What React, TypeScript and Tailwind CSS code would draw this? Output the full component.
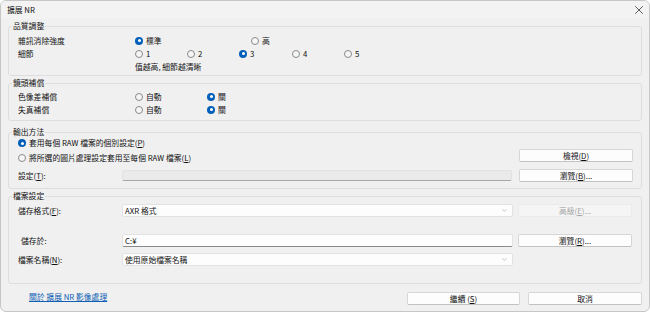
import { X, ChevronDown } from 'lucide-react'
import clsx from 'clsx'

function Radio({ checked, label, className }: { checked?: boolean; label: React.ReactNode; className?: string }) {
  return (
    <span className={clsx('flex items-center gap-[3px] shrink-0', className)}>
      {checked ? (
        <span className="w-[8px] h-[8px] rounded-full bg-[#005fb8] flex items-center justify-center shrink-0">
          <span className="w-[3px] h-[3px] rounded-full bg-white" />
        </span>
      ) : (
        <span className="w-[8px] h-[8px] rounded-full border border-[#8a8a8a] bg-[#f6f6f6] shrink-0" />
      )}
      <span>{label}</span>
    </span>
  )
}

function Button({ children, className, disabled }: { children: React.ReactNode; className?: string; disabled?: boolean }) {
  return (
    <div
      className={clsx(
        'h-[13px] rounded-[2px] border flex items-center justify-center shrink-0',
        disabled
          ? 'bg-[#f5f5f5] border-[#ebebeb] text-[#a3a3a3]'
          : 'bg-[#fdfdfd] border-[#d6d6d6] border-b-[#c2c2c2]',
        className
      )}
    >
      {children}
    </div>
  )
}

function Select({ value }: { value: string }) {
  return (
    <div className="w-[391px] h-[13px] rounded-[2px] border border-[#e2e2e2] bg-[#fdfdfd] flex items-center justify-between pl-[2px] pr-[4px] shrink-0">
      <span>{value}</span>
      <ChevronDown className="w-[7px] h-[7px] text-[#777]" strokeWidth={1.5} />
    </div>
  )
}

export default function App() {
  return (
    <div className="w-[650px] h-[312px] flex flex-col overflow-hidden rounded-[6px] border border-[#c6c6c6] bg-[#f0f0f0] text-[7.8px] leading-[10px] text-[#111] font-['Noto_Sans_CJK_TC','Noto_Sans',sans-serif]">
      {/* Title bar */}
      <div className="h-[18px] shrink-0 flex items-center justify-between pl-[6px] pr-[3px] bg-[#f3f3f3]">
        <span>擴展 NR</span>
        <X className="w-[14px] h-[14px] text-[#2b2b2b]" strokeWidth={1.3} />
      </div>

      <div className="flex flex-col px-[7px]">
        {/* 品質調整 */}
        <fieldset className="mt-[2px] border border-[#dddddd] rounded-[3px] pl-[9px] pr-[9px] pt-[3px] pb-[2px]">
          <legend className="ml-[-6px] px-[1px]">品質調整</legend>
          <div className="flex h-[13px] items-center">
            <span className="w-[117px] shrink-0">雜訊消除強度</span>
            <Radio checked label="標準" className="w-[116px]" />
            <Radio label="高" />
          </div>
          <div className="flex h-[13px] items-center">
            <span className="w-[117px] shrink-0">細節</span>
            <Radio label="1" className="w-[52px]" />
            <Radio label="2" className="w-[52px]" />
            <Radio checked label="3" className="w-[53px]" />
            <Radio label="4" className="w-[52px]" />
            <Radio label="5" />
          </div>
          <div className="flex h-[13px] items-center pl-[117px]">值越高, 細節越清晰</div>
        </fieldset>

        {/* 鏡頭補償 */}
        <fieldset className="mt-[2px] border border-[#dddddd] rounded-[3px] pl-[9px] pr-[9px] pt-[2px] pb-[4px]">
          <legend className="ml-[-6px] px-[1px]">鏡頭補償</legend>
          <div className="flex h-[13px] items-center">
            <span className="w-[117px] shrink-0">色像差補償</span>
            <Radio label="自動" className="w-[72px]" />
            <Radio checked label="關" />
          </div>
          <div className="flex h-[13px] items-center">
            <span className="w-[117px] shrink-0">失真補償</span>
            <Radio label="自動" className="w-[72px]" />
            <Radio checked label="關" />
          </div>
        </fieldset>

        {/* 輸出方法 */}
        <fieldset className="mt-[6px] border border-[#dddddd] rounded-[3px] pl-[9px] pr-[8px] pb-[6px]">
          <legend className="ml-[-6px] px-[1px]">輸出方法</legend>
          <div className="flex h-[12px] items-center">
            <Radio checked label={<>套用每個 RAW 檔案的個別設定(<u>P</u>)</>} />
          </div>
          <div className="flex h-[14px] items-start">
            <Radio label={<>將所選的圖片處理設定套用至每個 RAW 檔案(<u>L</u>)</>} className="mt-[4px]" />
            <Button className="ml-auto w-[114px]">
              檢視(<u>D</u>)
            </Button>
          </div>
          <div className="mt-[6px] flex h-[13px] items-center">
            <span className="w-[104px] shrink-0">
              設定(<u>T</u>):
            </span>
            <div className="w-[390px] h-[11px] rounded-[2px] bg-[#eaeaea] border border-[#e2e2e2] border-b-[#a6a6a6] shrink-0" />
            <Button className="ml-auto w-[114px]">
              瀏覽(<u>B</u>)...
            </Button>
          </div>
        </fieldset>

        {/* 檔案設定 */}
        <fieldset className="mt-[2px] border border-[#dddddd] rounded-[3px] pl-[9px] pr-[9px] pt-[3px] pb-[17px]">
          <legend className="ml-[-6px] px-[1px]">檔案設定</legend>
          <div className="flex h-[13px] items-center">
            <span className="w-[104px] shrink-0">
              儲存格式(<u>F</u>):
            </span>
            <Select value="AXR 格式" />
            <Button disabled className="ml-auto w-[114px] h-[12px]">
              高級(<u>E</u>)...
            </Button>
          </div>
          <div className="mt-[17px] flex h-[13px] items-center">
            <span className="w-[104px] shrink-0 pl-[3px]">儲存於:</span>
            <div className="w-[391px] h-[13px] rounded-[2px] bg-[#fdfdfd] border border-[#e3e3e3] border-b-[#8a8a8a] flex items-center pl-[2px] shrink-0">
              C:¥
            </div>
            <Button className="ml-auto w-[114px]">
              瀏覽(<u>R</u>)...
            </Button>
          </div>
          <div className="mt-[6px] flex h-[13px] items-center">
            <span className="w-[104px] shrink-0">
              檔案名稱(<u>N</u>):
            </span>
            <Select value="使用原始檔案名稱" />
          </div>
        </fieldset>

        {/* Footer */}
        <div className="mt-[8px] flex items-start">
          <span className="ml-[21px] text-[#0f5fb5] underline">關於 擴展 NR 影像處理</span>
          <Button className="ml-auto w-[113px] border-[#3f86d2] border-b-[#3f86d2]">
            繼續 (<u>S</u>)
          </Button>
          <Button className="ml-[8px] w-[114px]">取消</Button>
        </div>
      </div>
    </div>
  )
}
